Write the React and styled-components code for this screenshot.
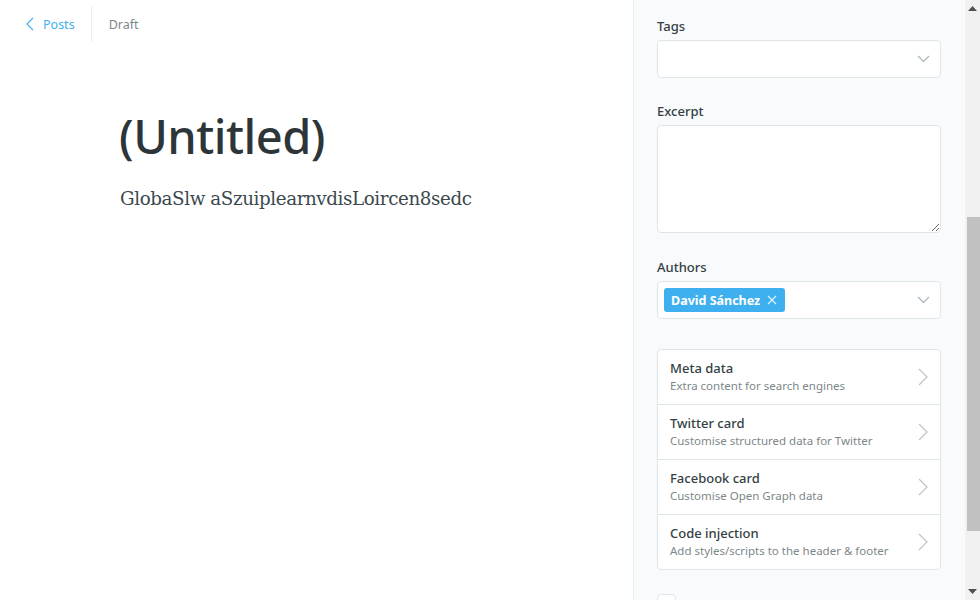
import React from 'react';
import styled, { createGlobalStyle } from 'styled-components';

const GlobalStyle = createGlobalStyle`
  html, body {
    margin: 0;
    padding: 0;
    overflow: hidden;
    background: #fff;
  }
  * {
    box-sizing: border-box;
  }
`;

const sans = `"Noto Sans", "Open Sans", sans-serif`;

const Page = styled.div`
  display: flex;
  width: 980px;
  height: 600px;
  font-family: ${sans};
  color: #343f44;
`;

const Main = styled.main`
  flex: 1;
  display: flex;
  flex-direction: column;
  background: #fff;
`;

const Header = styled.header`
  display: flex;
  align-items: center;
  height: 48px;
  padding-left: 26px;
`;

const BackLink = styled.a`
  display: flex;
  align-items: center;
  gap: 9px;
  height: 36px;
  padding-right: 16px;
  border-right: 1px solid #e5eff5;
  color: #3eb0ef;
  font-size: 12.5px;
  text-decoration: none;
`;

const Status = styled.span`
  padding-left: 17px;
  font-size: 12.5px;
  color: #7d878a;
`;

const Editor = styled.div`
  padding: 60px 0 0 119px;
`;

const Title = styled.h1`
  margin: 0;
  font-family: ${sans};
  font-size: 47px;
  font-weight: 500;
  line-height: 1.2;
  color: #2e3538;
  letter-spacing: -0.5px;
`;

const Body = styled.p`
  margin: 24px 0 0 1px;
  font-family: "DejaVu Serif", Georgia, serif;
  font-size: 18.3px;
  color: #3c484e;
  letter-spacing: -0.4px;
`;

const Sidebar = styled.aside`
  width: 332px;
  height: 600px;
  overflow: hidden;
  background: #f8fafb;
  border-left: 1px solid #e5eff5;
  padding: 17px 24px 0 23px;
`;

const FormGroup = styled.div`
  margin-bottom: ${p => p.$gap || 24}px;
`;

const Label = styled.label`
  display: block;
  height: 18px;
  margin-bottom: 5px;
  font-size: 13px;
  font-weight: 500;
  line-height: 18px;
  color: #343f44;
`;

const SelectBox = styled.div`
  display: flex;
  align-items: center;
  height: 38px;
  padding: 0 10px 0 6px;
  background: #fff;
  border: 1px solid #dfe6ea;
  border-radius: 4px;
`;

const Spacer = styled.div`
  flex: 1;
`;

const TextArea = styled.textarea`
  display: block;
  width: 100%;
  height: 108px;
  margin: 0;
  padding: 8px 10px;
  background: #fff;
  border: 1px solid #dfe6ea;
  border-radius: 4px;
  font-family: ${sans};
  font-size: 13px;
  resize: vertical;
  outline: none;
`;

const Token = styled.span`
  display: inline-flex;
  align-items: center;
  gap: 7px;
  height: 24px;
  padding: 0 8px 0 7px;
  background: #3eb0ef;
  border-radius: 3px;
  color: #fff;
  font-size: 12.5px;
  font-weight: 700;
`;

const NavList = styled.ul`
  list-style: none;
  margin: 0;
  padding: 0;
  background: #fff;
  border: 1px solid #dfe6ea;
  border-radius: 4px;
`;

const NavItem = styled.li`
  box-sizing: content-box;
  display: flex;
  align-items: center;
  height: 54px;
  padding: 0 12px;
  border-top: ${p => (p.$first ? 'none' : '1px solid #dfe6ea')};
`;

const NavText = styled.div`
  flex: 1;
  display: flex;
  flex-direction: column;
  gap: 1px;
`;

const NavTitle = styled.span`
  font-size: 13px;
  font-weight: 500;
  line-height: 17px;
  color: #343f44;
`;

const NavSub = styled.span`
  font-size: 11.5px;
  line-height: 16px;
  color: #7d878a;
`;

const CheckRow = styled.label`
  display: flex;
  align-items: flex-start;
  gap: 12px;
  margin-top: 24px;
  font-size: 13px;
  color: #343f44;
`;

const CheckBox = styled.span`
  width: 19px;
  height: 19px;
  flex: none;
  background: #fff;
  border: 1px solid #dfe6ea;
  border-radius: 4px;
`;

const CheckText = styled.span`
  padding-top: 6px;
`;

const Scrollbar = styled.div`
  width: 15px;
  height: 600px;
  display: flex;
  flex-direction: column;
  background: #f1f1f1;
`;

const ArrowButton = styled.div`
  height: 17px;
  display: flex;
  align-items: center;
  justify-content: center;
`;

const Track = styled.div`
  flex: 1;
  padding: ${p => p.$offset}px 0 0 2px;
`;

const Thumb = styled.div`
  height: ${p => p.$size}px;
  background: #c1c1c1;
`;

const ChevronDown = () => (
  <svg width="13" height="8" viewBox="0 0 13 8" fill="none">
    <path d="M1 1l5.5 5.5L12 1" stroke="#a7b3b9" strokeWidth="1.1" />
  </svg>
);

const ChevronRight = () => (
  <svg width="10" height="18" viewBox="0 0 10 18" fill="none">
    <path d="M1 1l8 8-8 8" stroke="#b9c3c8" strokeWidth="1.1" />
  </svg>
);

const ChevronLeft = () => (
  <svg width="8" height="14" viewBox="0 0 8 14" fill="none">
    <path d="M7 1L1 7l6 6" stroke="#3eb0ef" strokeWidth="1.1" />
  </svg>
);

const CloseIcon = () => (
  <svg width="10" height="10" viewBox="0 0 10 10" fill="none">
    <path d="M1 1l8 8M9 1L1 9" stroke="#fff" strokeWidth="1.1" opacity="0.85" />
  </svg>
);

const Triangle = ({ down }) => (
  <svg width="9" height="5" viewBox="0 0 9 5">
    <path d={down ? 'M0 0h9L4.5 5z' : 'M0 5h9L4.5 0z'} fill="#505050" />
  </svg>
);

const navItems = [
  { title: 'Meta data', sub: 'Extra content for search engines' },
  { title: 'Twitter card', sub: 'Customise structured data for Twitter' },
  { title: 'Facebook card', sub: 'Customise Open Graph data' },
  { title: 'Code injection', sub: 'Add styles/scripts to the header & footer' },
];

const App = () => (
  <>
    <GlobalStyle />
    <Page>
      <Main>
        <Header>
          <BackLink href="#">
            <ChevronLeft />
            Posts
          </BackLink>
          <Status>Draft</Status>
        </Header>
        <Editor>
          <Title>(Untitled)</Title>
          <Body>GlobaSlw aSzuiplearnvdisLoircen8sedc</Body>
        </Editor>
      </Main>

      <Sidebar>
        <FormGroup>
          <Label>Tags</Label>
          <SelectBox>
            <Spacer />
            <ChevronDown />
          </SelectBox>
        </FormGroup>

        <FormGroup $gap={25}>
          <Label>Excerpt</Label>
          <TextArea />
        </FormGroup>

        <FormGroup $gap={30}>
          <Label>Authors</Label>
          <SelectBox>
            <Token>
              David Sánchez
              <CloseIcon />
            </Token>
            <Spacer />
            <ChevronDown />
          </SelectBox>
        </FormGroup>

        <NavList>
          {navItems.map((item, i) => (
            <NavItem key={item.title} $first={i === 0}>
              <NavText>
                <NavTitle>{item.title}</NavTitle>
                <NavSub>{item.sub}</NavSub>
              </NavText>
              <ChevronRight />
            </NavItem>
          ))}
        </NavList>

        <CheckRow>
          <CheckBox />
          <CheckText>Turn this post into a page</CheckText>
        </CheckRow>
      </Sidebar>

      <Scrollbar>
        <ArrowButton>
          <Triangle />
        </ArrowButton>
        <Track $offset={200}>
          <Thumb $size={314} />
        </Track>
        <ArrowButton>
          <Triangle down />
        </ArrowButton>
      </Scrollbar>
    </Page>
  </>
);

export default App;
